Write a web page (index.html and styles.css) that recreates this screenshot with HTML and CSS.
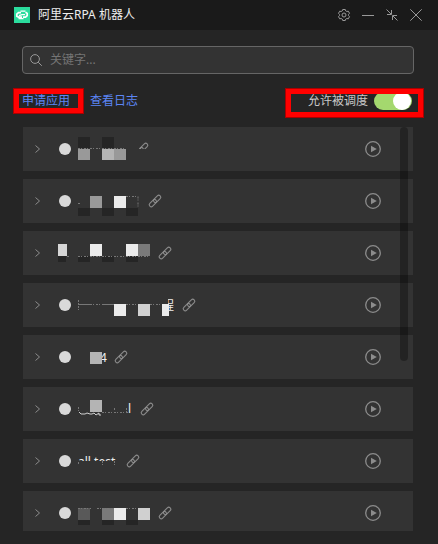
FILE: index.html
```html
<!DOCTYPE html>
<html lang="zh-CN">
<head>
  <meta charset="UTF-8">
  <meta name="viewport" content="width=device-width, initial-scale=1.0">
  <title>阿里云RPA 机器人</title>
  <link rel="stylesheet" href="styles.css">
</head>
<body>
  <svg class="sprite" aria-hidden="true">
    <symbol id="icon-chevron" viewBox="0 0 6 8">
      <path d="M.5 .5L4.5 4L.5 7.5" fill="none" stroke="currentColor"/>
    </symbol>
    <symbol id="icon-link" viewBox="0 0 12 12" overflow="visible">
      <g fill="none" stroke="currentColor" stroke-width="1.1" transform="rotate(-45 6 6)">
        <rect x="-1.3" y="4" width="8.6" height="4" rx="2"/>
        <rect x="4.7" y="4" width="8.6" height="4" rx="2"/>
      </g>
    </symbol>
    <symbol id="icon-play" viewBox="0 0 16 16">
      <circle cx="8" cy="8" r="7.3" fill="none" stroke="currentColor" stroke-width="1.3"/>
      <path d="M6 4.8L11.8 8L6 11.2z" fill="currentColor"/>
    </symbol>
  </svg>

  <header class="titlebar">
    <svg class="logo" viewBox="0 0 16 16">
      <rect width="16" height="16" fill="#2bdc9d"/>
      <path d="M7 5.6H4.5L2.8 7.2V9.2L4.5 10.2H8M9 10.2H11.5L13.2 8.6V6.4L11.5 5.2" fill="none" stroke="#fff" stroke-width="1.7"/>
      <path d="M6.5 4.2H11.5M4.5 11.7H9.5M5 8.6L8 7.6H11" fill="none" stroke="#fff" stroke-width="1.3"/>
    </svg>
    <h1>阿里云RPA 机器人</h1>
    <div class="window-buttons">
      <button type="button" aria-label="设置">
        <svg viewBox="0 0 12 12">
          <path d="M4.7 .5h2.6l.5 1.5 .9.5 1.6-.3 1.2 2.1-1 1.2v1l1 1.2-1.2 2.1-1.6-.3-.9.5-.5 1.5H4.7l-.5-1.5-.9-.5-1.6.3L.5 7.7l1-1.2v-1l-1-1.2 1.2-2.1 1.6.3.9-.5z"/>
          <circle cx="6" cy="6" r="2"/>
        </svg>
      </button>
      <button type="button" aria-label="最小化">
        <svg viewBox="0 0 12 12"><path d="M0 6.5h12"/></svg>
      </button>
      <button type="button" aria-label="缩小">
        <svg viewBox="0 0 12 12"><path d="M.5 .5l4.5 4.5M5.5 1v4.5H1M11.5 11.5L7 7M6.5 11V6.5h4.5"/></svg>
      </button>
      <button type="button" aria-label="关闭">
        <svg viewBox="0 0 12 12"><path d="M.3 .3l11.4 11.4M11.7 .3L.3 11.7"/></svg>
      </button>
    </div>
  </header>

  <main>
    <label class="search">
      <svg viewBox="0 0 12 12"><circle cx="5" cy="5" r="4.4"/><path d="M8.2 8.2l3.6 3.6"/></svg>
      <input type="text" placeholder="关键字..." aria-label="关键字">
    </label>

    <div class="toolbar">
      <a class="marked" href="#">申请应用</a>
      <a href="#">查看日志</a>
      <label class="schedule marked">
        允许被调度
        <input type="checkbox" role="switch" checked>
      </label>
    </div>

    <div class="list">
      <ul>
        <li>
          <button class="expand" type="button" aria-label="展开"><svg><use href="#icon-chevron"/></svg></button>
          <span class="status"></span>
          <svg class="name" width="48" height="44">
            <path class="dark" d="M0 10h12v11H0zM24 10h12v11H24z"/>
            <path class="dots" d="M0 21.5h48"/>
            <path fill="#999" d="M0 22h12v11H0zM36 22h12v11H36z"/>
            <path fill="#b4b4b4" d="M24 22h12v11H24z"/>
            <path class="cover" d="M56 22h16v8H56zM56 14h5v8h-5z"/>
          </svg>
          <a class="link" href="#" aria-label="链接"><svg><use href="#icon-link"/></svg></a>
          <button class="play" type="button" aria-label="运行"><svg><use href="#icon-play"/></svg></button>
        </li>
        <li>
          <button class="expand" type="button" aria-label="展开"><svg><use href="#icon-chevron"/></svg></button>
          <span class="status"></span>
          <svg class="name" width="61" height="44">
            <path class="dark" d="M0 29h12v8H0zM24 29h12v8H24zM48 29h12v8H48z"/>
            <path class="dots" d="M0 24.5h2M48 17.5h12v12"/>
            <path fill="#999" d="M12 17h12v12H12z"/>
            <path fill="#ebebeb" d="M36 17h12v12H36z"/>
          </svg>
          <a class="link" href="#" aria-label="链接"><svg><use href="#icon-link"/></svg></a>
          <button class="play" type="button" aria-label="运行"><svg><use href="#icon-play"/></svg></button>
        </li>
        <li>
          <button class="expand" type="button" aria-label="展开"><svg><use href="#icon-chevron"/></svg></button>
          <span class="status"></span>
          <svg class="name" width="71" height="44">
            <path class="cover" d="M-20 12H-6v20h-14z"/>
            <path class="dark" d="M-20 25h8v6h-8zM0 25h12v6H0zM24 25h12v6H24zM48 25h12v6H48z"/>
            <path class="dots" d="M-11 25.5h3M0 25.5h72"/>
            <path fill="#d6d6d6" d="M-20 13h9v12h-9z"/>
            <path fill="#ebebeb" d="M12 13h12v12H12zM48 13h12v12H48z"/>
            <path fill="#7a7a7a" d="M60 13h12v12H60z"/>
          </svg>
          <a class="link" href="#" aria-label="链接"><svg><use href="#icon-link"/></svg></a>
          <button class="play" type="button" aria-label="运行"><svg><use href="#icon-play"/></svg></button>
        </li>
        <li>
          <button class="expand" type="button" aria-label="展开"><svg><use href="#icon-chevron"/></svg></button>
          <span class="status"></span>
          <svg class="name" width="95" height="44">
            <text x="84" y="27">程</text>
            <path class="cover" d="M82 12h8v18h-8z"/>
            <path class="dots" d="M.5 17v10M0 21.5h90"/>
            <path fill="#777" d="M1 21h13v1H1zM24 21h12v1H24z"/>
            <path fill="#ebebeb" d="M36 21h12v12H36zM84 21h7v12h-7z"/>
            <path fill="#d0d0d0" d="M60 21h12v12H60z"/>
          </svg>
          <a class="link" href="#" aria-label="链接"><svg><use href="#icon-link"/></svg></a>
          <button class="play" type="button" aria-label="运行"><svg><use href="#icon-play"/></svg></button>
        </li>
        <li>
          <button class="expand" type="button" aria-label="展开"><svg><use href="#icon-chevron"/></svg></button>
          <span class="status"></span>
          <svg class="name" width="27" height="44">
            <text x="22" y="27">4</text>
            <path fill="#b4b4b4" d="M12 17h12v12H12z"/>
          </svg>
          <a class="link" href="#" aria-label="链接"><svg><use href="#icon-link"/></svg></a>
          <button class="play" type="button" aria-label="运行"><svg><use href="#icon-play"/></svg></button>
        </li>
        <li>
          <button class="expand" type="button" aria-label="展开"><svg><use href="#icon-chevron"/></svg></button>
          <span class="status"></span>
          <svg class="name" width="53" height="44">
            <text x="50" y="26">l</text>
            <path fill="#b4b4b4" d="M12 13h12v12H12z"/>
            <path d="M1 25l2 2h4l2-1 3 1h2l2-1 2 2 3-2v2h2" fill="none" stroke="#d0d0d0"/>
            <path class="dots" d="M.5 20v5M24 25.5h26M48.5 21v5M36.5 21v3"/>
          </svg>
          <a class="link" href="#" aria-label="链接"><svg><use href="#icon-link"/></svg></a>
          <button class="play" type="button" aria-label="运行"><svg><use href="#icon-play"/></svg></button>
        </li>
        <li>
          <button class="expand" type="button" aria-label="展开"><svg><use href="#icon-chevron"/></svg></button>
          <span class="status"></span>
          <svg class="name" width="39" height="44">
            <text x="0" y="27">all test</text>
            <path class="cover" d="M0 22h42v8H0z"/>
            <path class="dots" d="M.5 23v3M24.5 22v5M36.5 22v5"/>
          </svg>
          <a class="link" href="#" aria-label="链接"><svg><use href="#icon-link"/></svg></a>
          <button class="play" type="button" aria-label="运行"><svg><use href="#icon-play"/></svg></button>
        </li>
        <li>
          <button class="expand" type="button" aria-label="展开"><svg><use href="#icon-chevron"/></svg></button>
          <span class="status"></span>
          <svg class="name" width="71" height="44">
            <path class="dark" d="M0 29h12v5H0zM24 29h12v5H24zM48 29h12v5H48z"/>
            <path fill="#595959" d="M0 17h12v12H0z"/>
            <path fill="#7a7a7a" d="M24 17h12v12H24z"/>
            <path fill="#ebebeb" d="M36 17h12v12H36z"/>
            <path fill="#d0d0d0" d="M60 17h12v12H60z"/>
            <path class="dots" d="M0 17.5h13M19 17.5h17M48 17.5h10"/>
          </svg>
          <a class="link" href="#" aria-label="链接"><svg><use href="#icon-link"/></svg></a>
          <button class="play" type="button" aria-label="运行"><svg><use href="#icon-play"/></svg></button>
        </li>
      </ul>
      <div class="scrollbar"></div>
    </div>
  </main>
</body>
</html>
```
FILE: styles.css
```css
* {
  box-sizing: border-box;
}

body {
  display: flex;
  flex-direction: column;
  height: 100vh;
  margin: 0;
  background-color: #252525;
  color: #c8c8c8;
  font-family: "Noto Sans", "Noto Sans CJK SC", sans-serif;
  font-size: 12px;
  line-height: 16px;
}

button {
  display: flex;
  padding: 0;
  border: 0;
  background: none;
  color: inherit;
  cursor: pointer;
}

.sprite {
  display: none;
}

/* title bar */
.titlebar {
  display: flex;
  align-items: center;
  gap: 8px;
  height: 30px;
  padding: 0 16px 0 14px;
  background-color: #1a1a1a;
}

.logo {
  width: 16px;
  height: 16px;
}

h1 {
  margin: 0;
  color: #eee;
  font-size: 12px;
  font-weight: normal;
}

.window-buttons {
  display: flex;
  gap: 12px;
  margin-left: auto;
}

.window-buttons svg,
.search svg {
  width: 12px;
  height: 12px;
  overflow: visible;
  fill: none;
  stroke: #999;
}

main {
  display: flex;
  flex: 1;
  flex-direction: column;
  min-height: 0;
  padding: 16px 24px 13px 22px;
}

/* search */
.search {
  display: flex;
  flex: none;
  align-items: center;
  gap: 8px;
  height: 28px;
  padding: 0 7px;
  border: 1px solid #666;
  border-radius: 4px;
  background-color: #333;
}

.search input {
  flex: 1;
  min-width: 0;
  padding: 0;
  border: 0;
  outline: none;
  background: none;
  color: #ccc;
  font: inherit;
}

.search input::placeholder {
  color: #757575;
}

/* links and switch */
.toolbar {
  display: flex;
  flex: none;
  align-items: center;
  gap: 20px;
  height: 53px;
}

.toolbar a {
  color: #5c85f5;
  text-decoration: none;
}

.schedule {
  display: flex;
  align-items: center;
  gap: 6px;
  margin-left: auto;
  padding-right: 2px;
}

.schedule input {
  width: 38px;
  height: 18px;
  margin: 0;
  padding: 0 1px;
  border-radius: 9px;
  background-color: #a4d86e;
  appearance: none;
}

.schedule input::before {
  content: "";
  display: block;
  width: 18px;
  height: 18px;
  margin-left: auto;
  border-radius: 50%;
  background-color: #fff;
}

/* red frame drawn over the marked items */
.marked {
  position: relative;
}

.marked::after {
  content: "";
  position: absolute;
  inset: -5px -14px -5px -9px;
  border: 6px solid #f00;
  outline: 1px solid #a00;
  outline-offset: -1px;
  pointer-events: none;
}

.schedule.marked::after {
  inset: -4px -10px -8px -23px;
}

/* robots */
.list {
  position: relative;
  flex: 1;
  min-height: 0;
  margin: 0 1px;
  overflow: hidden;
}

ul {
  display: flex;
  flex-direction: column;
  gap: 8px;
  margin: 0;
  padding: 0;
  list-style: none;
}

li {
  display: flex;
  align-items: center;
  height: 44px;
  padding: 0 32px 0 12px;
  background-color: #333;
  color: #8c8c8c;
}

.expand svg {
  width: 6px;
  height: 8px;
}

.status {
  width: 12px;
  height: 12px;
  margin: 0 7px 0 18px;
  border-radius: 50%;
  background-color: #d9d9d9;
}

.name {
  position: relative;
  z-index: 1;
  flex: none;
  margin-right: 10px;
  overflow: visible;
}

.name text {
  fill: #eee;
}

.name .dark {
  fill: #252525;
}

.name .cover {
  fill: #333;
}

.name .dots {
  fill: none;
  stroke: #777;
  stroke-dasharray: 2 1 1 2;
}

.link {
  display: flex;
  color: inherit;
}

.link svg {
  width: 12px;
  height: 12px;
  overflow: visible;
}

.play {
  margin-left: auto;
}

.play svg {
  width: 16px;
  height: 16px;
}

.scrollbar {
  position: absolute;
  z-index: 2;
  top: 0;
  right: 5px;
  width: 8px;
  height: 58%;
  border-radius: 4px;
  background-color: rgba(0, 0, 0, 0.3);
}
```
